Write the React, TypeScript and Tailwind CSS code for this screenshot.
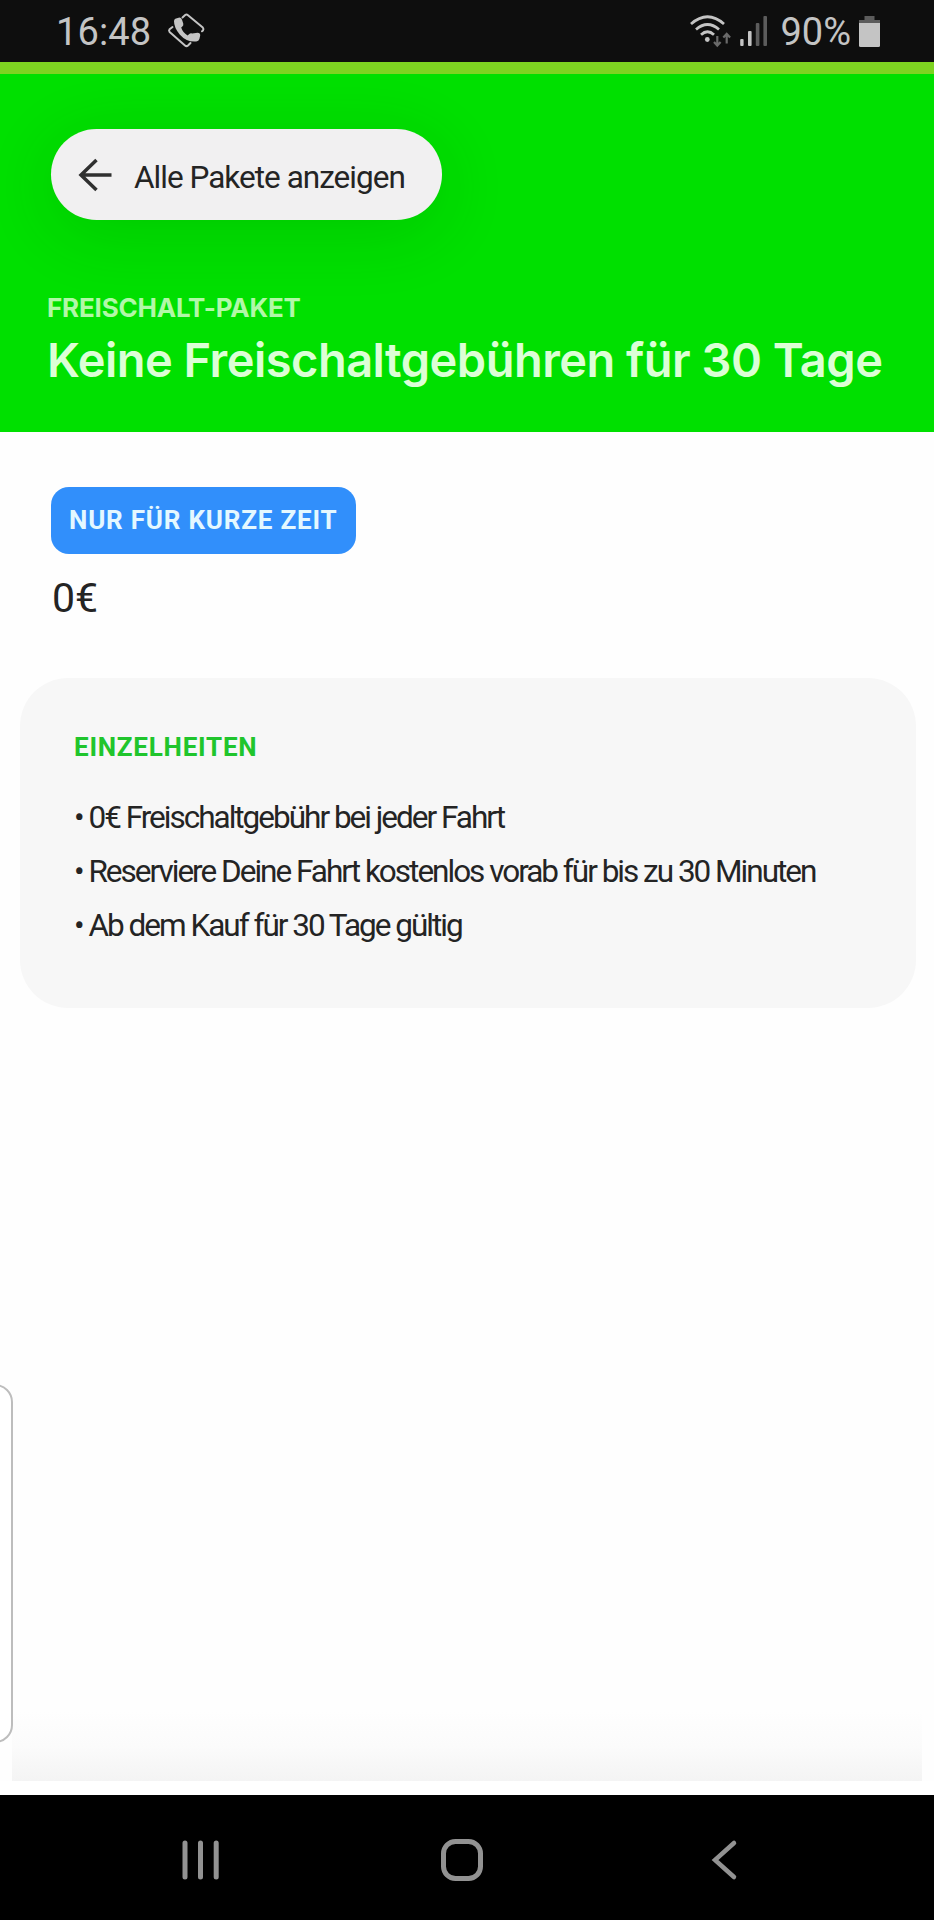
import { ReactNode } from "react";

const details = [
  "0€ Freischaltgebühr bei jeder Fahrt",
  "Reserviere Deine Fahrt kostenlos vorab für bis zu 30 Minuten",
  "Ab dem Kauf für 30 Tage gültig",
];

const CallIcon = () => (
  <svg width="40" height="38" viewBox="0 0 40 38" className="ml-[15px]" fill="none">
    <g stroke="#c4c4c4" strokeWidth="2" strokeLinecap="round" strokeLinejoin="round">
      <path d="M16.5 5.5 19.2 3 Q20.5 2 22 3.2 L36.8 15.5 Q38 17 37 18.5 L36 19.3" />
      <path d="M6.5 15 L3.6 17.3 Q2.5 18.5 3.6 20 L19 33.5 Q20.5 34.8 22 33.5 L24.5 31" />
    </g>
    <path
      fill="#c4c4c4"
      d="M9.3 6.8 L12.6 5.7 Q15.2 5.2 16 7.8 L17.3 11.8 Q17.7 13.6 16.1 14.7 L15.2 15.4 Q16.6 20.3 21.6 23.4 L23 22.2 Q24.4 20.9 26.2 21.5 L31.6 20.7 Q34.4 20.8 34.2 23.4 L33.4 27 Q32.7 29.3 30.3 29.4 Q20.6 30.3 13.7 22.4 Q8 15.6 8 9.2 Q8 7.4 9.3 6.8Z"
    />
  </svg>
);

const WifiIcon = () => (
  <svg width="44" height="34" viewBox="0 0 44 34" fill="none">
    <g stroke="#c4c4c4" strokeWidth="2.8">
      <path d="M2 10 Q18.5 -4.5 35 10" />
      <path d="M7 15.5 Q18.5 5.5 30 15.5" />
      <path d="M12 20.8 Q18.5 14.8 25 20.8" />
    </g>
    <circle cx="18.3" cy="25.5" r="2.4" fill="#c4c4c4" />
    <path
      d="M28.3 22v9.5M25 28l3.3 3.6 3.3-3.6M37.7 29.5V20M34.3 23.5l3.4-3.6 3.4 3.6"
      stroke="#6a6a6a"
      strokeWidth="2.2"
    />
  </svg>
);

const SignalIcon = () => (
  <svg width="28" height="30" viewBox="0 0 28 30" className="ml-[7px]">
    <rect x="0.2" y="23" width="3.4" height="7" rx="1" fill="#c4c4c4" />
    <rect x="8" y="15" width="3.6" height="15" rx="1" fill="#c4c4c4" />
    <rect x="15.8" y="7" width="3.6" height="23" rx="1" fill="#5c5c5c" />
    <rect x="23.4" y="0" width="3.6" height="30" rx="1" fill="#5c5c5c" />
  </svg>
);

const BatteryIcon = () => (
  <svg width="21" height="31" viewBox="0 0 21 31" className="ml-[8px]">
    <path d="M5.5 0h10v4H21v3H0V4h5.5z" fill="#5c5c5c" />
    <path d="M0 7h21v22.5q0 1.5-1.5 1.5h-18q-1.5 0-1.5-1.5z" fill="#c4c4c4" />
  </svg>
);

const StatusBar = () => (
  <header className="flex h-[62px] items-center justify-between bg-[#0e0e0e] pr-[54px] pl-[56px] text-[38px] leading-none text-[#c4c4c4]">
    <div className="flex items-center">
      <span className="mt-[2px] tracking-[0.1px]">16:48</span>
      <CallIcon />
    </div>
    <div className="flex items-center">
      <WifiIcon />
      <SignalIcon />
      <span className="mt-[2px] ml-[12px]">90%</span>
      <BatteryIcon />
    </div>
  </header>
);

const NavButton = ({ label, children }: { label: string; children: ReactNode }) => (
  <button type="button" aria-label={label} className="flex size-[44px] items-center justify-center">
    {children}
  </button>
);

const NavBar = () => (
  <nav className="flex h-[125px] items-center bg-black pt-[5px] pl-[179px] text-[#929292]">
    <NavButton label="Recents">
      <svg width="44" height="44" viewBox="0 0 44 44" stroke="currentColor" strokeWidth="5" strokeLinecap="round">
        <path d="M6 5v34M21.5 5v34M37.2 5v34" />
      </svg>
    </NavButton>
    <div className="ml-[217px] flex">
      <NavButton label="Home">
        <svg width="44" height="44" viewBox="0 0 44 44" fill="none" stroke="currentColor" strokeWidth="5">
          <rect x="3.5" y="3.5" width="37" height="37" rx="12" />
        </svg>
      </NavButton>
    </div>
    <div className="ml-[219px] flex">
      <NavButton label="Back">
        <svg width="44" height="44" viewBox="0 0 44 44" fill="none" stroke="currentColor" strokeWidth="4.5" strokeLinecap="round">
          <path d="M31 5 12 22 31 39" />
        </svg>
      </NavButton>
    </div>
  </nav>
);

const App = () => {
  return (
    <div className="relative flex h-[1920px] w-[934px] flex-col overflow-hidden bg-[#fefefe] font-['Roboto',sans-serif] text-[#242424]">
      <StatusBar />
      <div className="h-[12px] bg-[#7ed321]" />

      <section className="h-[358px] bg-[#00e000] pt-[55px] pl-[47px] font-['Inter',sans-serif]">
        <button
          type="button"
          className="ml-[4px] flex h-[91px] w-[391px] items-center rounded-full bg-[#f1f0f1] pl-[26px] font-['Roboto',sans-serif] shadow-[0_12px_70px_rgba(0,60,0,0.14)]"
        >
          <svg width="36" height="34" viewBox="0 0 36 34" fill="none" stroke="#303030" strokeWidth="3.5">
            <path d="M34.5 17H4M19.5 2 4 17l15.5 15" />
          </svg>
          <span className="mt-[6px] ml-[21px] text-[31.5px] leading-none tracking-[-0.98px] whitespace-nowrap">
            Alle Pakete anzeigen
          </span>
        </button>
        <p className="mt-[72px] text-[26px] leading-[32px] font-bold tracking-[-0.2px] text-[#b2f8a8]">
          FREISCHALT-PAKET
        </p>
        <h1 className="mt-[6px] text-[47px] leading-[60px] font-semibold tracking-[-0.52px] whitespace-nowrap text-[#dcffd6]">
          Keine Freischaltgebühren für 30 Tage
        </h1>
      </section>

      <main className="flex flex-1 flex-col">
        <div className="pt-[55px] pl-[51px]">
          <span className="flex h-[67px] w-[305px] items-center rounded-[18px] bg-[#318ffb] pb-[2px] pl-[18px] text-[26px] leading-none font-bold tracking-[0.8px] whitespace-nowrap text-[#e4f8ff]">
            NUR FÜR KURZE ZEIT
          </span>
          <p className="mt-[20px] ml-px text-[41px] leading-[48px]">0€</p>
        </div>

        <section className="mx-[20px] mt-[56px] h-[330px] w-[896px] rounded-[48px] bg-[#f7f7f7] pt-[53px] pl-[54px]">
          <h2 className="text-[26px] leading-[32px] font-bold tracking-[0.75px] text-[#20c52c]">
            EINZELHEITEN
          </h2>
          <ul className="mt-[28px] text-[31.5px] leading-[54px] tracking-[-2px] whitespace-nowrap">
            {details.map((item) => (
              <li key={item}>• {item}</li>
            ))}
          </ul>
        </section>

        {/* fade above the bottom sheet edge */}
        <div className="mx-[12px] mt-auto h-[70px] bg-linear-to-b from-[#fefefe] via-[#fbfbfb] to-[#f4f4f4]" />
        <div className="h-[14px] bg-white" />
      </main>

      {/* edge panel handle */}
      <div className="absolute top-[1384px] -left-[40px] h-[359px] w-[53px] rounded-[18px] border-2 border-[#bdbdbd] bg-white" />

      <NavBar />
    </div>
  );
};

export default App;
